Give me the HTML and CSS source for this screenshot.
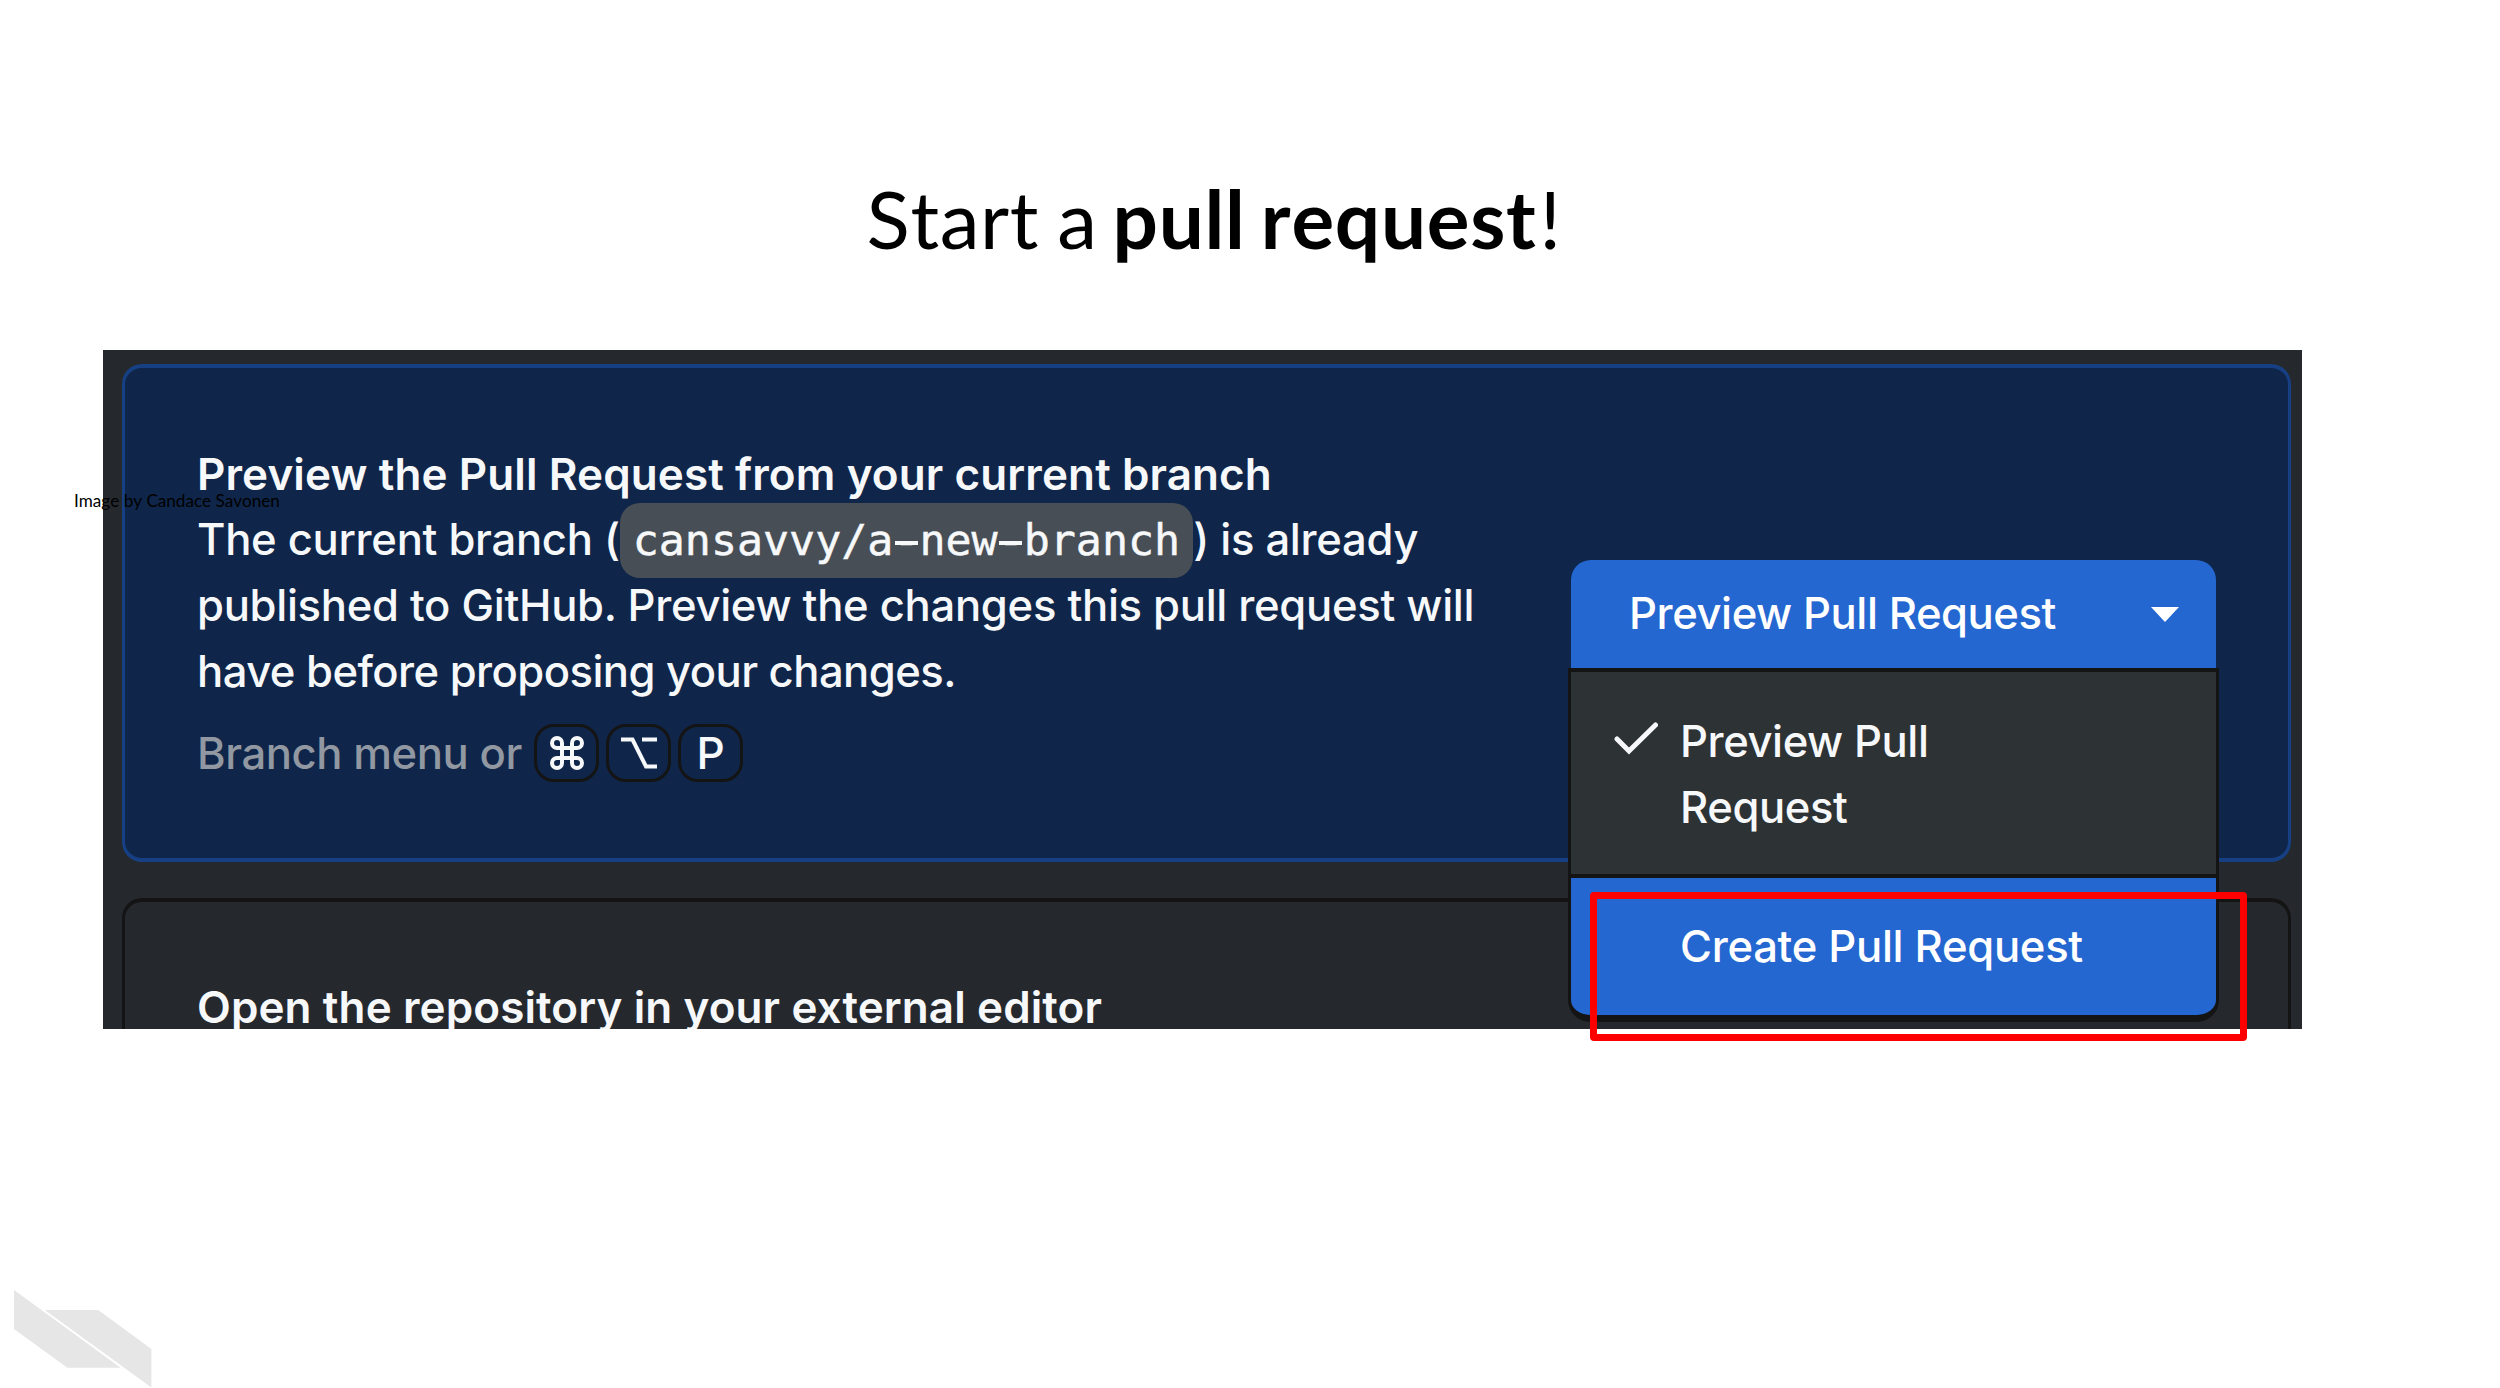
FILE: index.html
```html
<!DOCTYPE html>
<html lang="en">
<head>
<meta charset="utf-8">
<title>Start a pull request</title>
<link rel="stylesheet" href="styles.css">
</head>
<body>
<main class="slide">
  <h1 class="slide-title">Start a <strong>pull request</strong>!</h1>
  <section class="shot">
    <article class="card card-active">
      <div class="copy">
        <h2 class="card-title">Preview the Pull Request from your current branch</h2>
        <p class="card-text">The current branch (<code class="branch">cansavvy/a<span class="dash">-</span>new<span class="dash">-</span>branch</code>) is already<br>published to GitHub. Preview the changes this pull request will<br><span class="tight">have before proposing your changes.</span></p>
        <div class="shortcut">
          <span class="hint">Branch menu or</span>
          <kbd class="key"><svg width="34" height="34" viewBox="0 0 34 34"><path d="M12 12V7a5 5 0 1 0-5 5h20a5 5 0 1 0-5-5v20a5 5 0 1 0 5-5H7a5 5 0 1 0 5 5z"/></svg></kbd>
          <kbd class="key"><svg width="36" height="34" viewBox="0 0 36 34"><path d="M0 3.500H11.500L25 30.500H36M21 3.500H36"/></svg></kbd>
          <kbd class="key">P</kbd>
        </div>
      </div>
      <div class="split">
        <button class="split-button">Preview Pull Request<svg class="caret" width="28" height="15" viewBox="0 0 28 15"><path d="M0 0H28L14 15z"/></svg></button>
        <ul class="menu">
          <li class="menu-item"><svg class="check" width="44" height="34" viewBox="0 0 44 34"><path d="M3 17L15 29L41.500 3"/></svg><span>Preview Pull<br>Request</span></li>
          <li class="menu-item selected">Create Pull Request</li>
        </ul>
      </div>
    </article>
    <article class="card card-next">
      <h2 class="card-title">Open the repository in your external editor</h2>
    </article>
  </section>
  <p class="credit">Image by Candace Savonen</p>
  <div class="highlight"></div>
  <svg class="logo" width="138" height="98" viewBox="0 0 138 98"><path d="M0 0L106.700 77.700H53.400L0 39zM30.700 20H84.200L137.400 59V97.500z"/></svg>
</main>
</body>
</html>
```
FILE: styles.css
```css
* { box-sizing: border-box; }

body {
  margin: 0;
  background: #fff;
}

.slide {
  position: relative;
  width: 2500px;
  height: 1388px;
  overflow: hidden;
  font-family: "Inter", "Liberation Sans", sans-serif;
  font-weight: 450;
}

.slide-title {
  height: 350px;
  margin: 0;
  padding: 170px 72px 0 0;
  font: 400 80px/96px "Lato", sans-serif;
  font-kerning: none;
  letter-spacing: 0.600px;
  word-spacing: -3px;
  text-align: center;
  color: #000;
}

.slide-title strong {
  margin: 0 3px 0 -3px;
  font-weight: 700;
  letter-spacing: 0.700px;
  word-spacing: -5px;
}

.shot {
  width: 2199px;
  height: 679px;
  margin-left: 103px;
  padding: 14px 11px 0 19px;
  overflow: hidden;
  background: #25292e;
  color: #f6f8fa;
}

.card {
  display: flex;
  justify-content: space-between;
  border: solid #141414;
  border-width: 4px 3px;
  border-radius: 20px;
}

.card-active {
  height: 497.500px;
  padding: 73.500px 72px 0 72px;
  border-color: #164083;
  background: #0f264a;
}

.card-next {
  height: 300px;
  margin-top: 36px;
  padding: 73px 72px;
}

.card-title {
  margin: 0;
  font-size: 44px;
  line-height: 65.700px;
  font-weight: 600;
  letter-spacing: 0.110px;
  white-space: nowrap;
}

.card-text {
  margin: 0;
  font-size: 43.600px;
  line-height: 65.700px;
  letter-spacing: -0.300px;
  white-space: nowrap;
}

.tight { letter-spacing: -0.550px; }

.branch {
  padding: 12px 13px 13px;
  border-radius: 20px;
  background: #484e55;
  font: 43.300px/1 "DejaVu Sans Mono", monospace;
  letter-spacing: 0;
  -webkit-text-stroke: 0.500px #f6f8fa;
}

/* lengthens the hyphen to nearly the full character cell */
.dash {
  background: linear-gradient(#f6f8fa, #f6f8fa) 50% 26px / 23px 4px no-repeat;
}

.shortcut {
  display: flex;
  align-items: center;
  gap: 7px;
  margin-top: 20px;
  font-size: 43.600px;
}

.hint {
  width: 330px;
  color: #9198a1;
  letter-spacing: -0.430px;
  white-space: nowrap;
}

.key {
  display: flex;
  align-items: center;
  justify-content: center;
  width: 65px;
  height: 58px;
  border: 3px solid #141414;
  border-radius: 20px;
  font: 450 44px/50px "Inter", sans-serif;
}

.key path {
  fill: none;
  stroke: #f6f8fa;
  stroke-width: 4;
}

.split {
  position: relative;
  width: 645px;
  margin-top: 118px;
}

.split-button {
  display: flex;
  align-items: center;
  justify-content: space-between;
  width: 645px;
  height: 109px;
  padding: 0 37px 0 58px;
  border: 0;
  border-radius: 20px 20px 0 0;
  background: #2467d1;
  color: #fff;
  font: 450 43.600px/66px "Inter", sans-serif;
  letter-spacing: -0.430px;
}

.caret { fill: #fff; }

.menu {
  position: absolute;
  top: 108.500px;
  left: -3px;
  z-index: 1;
  width: 651px;
  height: 354px;
  margin: 0;
  padding: 0;
  list-style: none;
  overflow: hidden;
  border: solid #141414;
  border-width: 4px 3px 7px;
  border-radius: 0 0 22px 22px;
  background: #141414;
  font-size: 43.600px;
  line-height: 65.500px;
  letter-spacing: -0.430px;
  white-space: nowrap;
}

.menu-item {
  display: flex;
  height: 202px;
  padding: 37px 0 0 109px;
  background: #2d3235;
}

.menu-item.selected {
  height: 137px;
  margin-top: 4px;
  padding-top: 36px;
  background: #2467d1;
  color: #fff;
  letter-spacing: -0.300px;
}

.check {
  flex: none;
  margin: 13px 22px 0 -66px;
  fill: none;
  stroke: #f6f8fa;
  stroke-width: 5;
  stroke-linecap: round;
}

.credit {
  position: absolute;
  left: 74px;
  top: 491px;
  margin: 0;
  font: 17.100px/20px "Lato", sans-serif;
  font-kerning: none;
  color: #000;
  white-space: nowrap;
}

.highlight {
  position: absolute;
  left: 1590px;
  top: 892px;
  z-index: 2;
  width: 657px;
  height: 149px;
  border: 7px solid #f00;
  border-radius: 4px;
}

.logo {
  position: absolute;
  left: 14px;
  top: 1290px;
  fill: #e6e6e6;
}
```
